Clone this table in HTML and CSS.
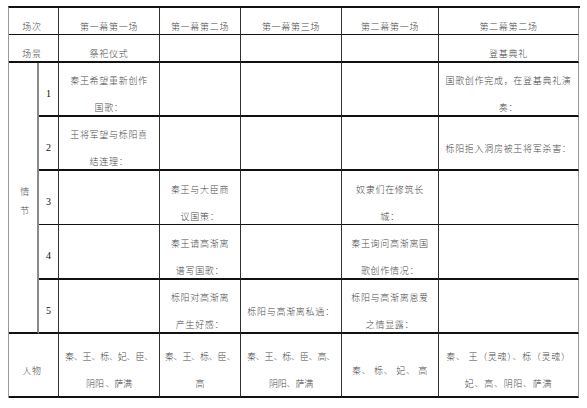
FILE: index.html
```html
<!DOCTYPE html>
<html lang="zh-CN">
<head>
<meta charset="utf-8">
<title>场次表</title>
<link rel="stylesheet" href="styles.css">
</head>
<body>
<div class="table">
  <!-- header row -->
  <div class="c r-hd span2"><span class="t">场次</span></div>
  <div class="c r-hd"><span class="t">第一幕第一场</span></div>
  <div class="c r-hd"><span class="t">第一幕第二场</span></div>
  <div class="c r-hd"><span class="t">第一幕第三场</span></div>
  <div class="c r-hd"><span class="t">第二幕第一场</span></div>
  <div class="c r-hd last"><span class="t">第二幕第二场</span></div>

  <!-- scene row -->
  <div class="c r-sc span2"><span class="t">场景</span></div>
  <div class="c r-sc"><span class="t">祭祀仪式</span></div>
  <div class="c r-sc"></div>
  <div class="c r-sc"></div>
  <div class="c r-sc"></div>
  <div class="c r-sc last"><span class="t">登基典礼</span></div>

  <!-- plot -->
  <div class="c plot"><span class="t plot-t">情<br>节</span></div>

  <div class="c r-1 num"><span class="t n">1</span></div>
  <div class="c r-1"><span class="t">秦王希望重新创作<br>国歌：</span></div>
  <div class="c r-1"></div>
  <div class="c r-1"></div>
  <div class="c r-1"></div>
  <div class="c r-1 last"><span class="t">国歌创作完成，在登基典礼演<br>奏：</span></div>

  <div class="c r-2 num"><span class="t n">2</span></div>
  <div class="c r-2"><span class="t">王将军望与栎阳喜<br>结连理：</span></div>
  <div class="c r-2"></div>
  <div class="c r-2"></div>
  <div class="c r-2"></div>
  <div class="c r-2 last"><span class="t">栎阳拒入洞房被王将军杀害：</span></div>

  <div class="c r-3 num"><span class="t n">3</span></div>
  <div class="c r-3"></div>
  <div class="c r-3"><span class="t">秦王与大臣商<br>议国策：</span></div>
  <div class="c r-3"></div>
  <div class="c r-3"><span class="t">奴隶们在修筑长<br>城：</span></div>
  <div class="c r-3 last"></div>

  <div class="c r-4 num"><span class="t n">4</span></div>
  <div class="c r-4"></div>
  <div class="c r-4"><span class="t">秦王请高渐离<br>谱写国歌：</span></div>
  <div class="c r-4"></div>
  <div class="c r-4"><span class="t">秦王询问高渐离国<br>歌创作情况：</span></div>
  <div class="c r-4 last"></div>

  <div class="c r-5 num"><span class="t n">5</span></div>
  <div class="c r-5"></div>
  <div class="c r-5"><span class="t">栎阳对高渐离<br>产生好感：</span></div>
  <div class="c r-5"><span class="t">栎阳与高渐离私通：</span></div>
  <div class="c r-5"><span class="t">栎阳与高渐离恩爱<br>之情显露：</span></div>
  <div class="c r-5 last"></div>

  <!-- people row -->
  <div class="c r-pp span2"><span class="t">人物</span></div>
  <div class="c r-pp"><span class="t tight">秦、王、栎、妃、臣、<br>阴阳 、萨满</span></div>
  <div class="c r-pp"><span class="t tight">秦、王、栎、臣、<br>高</span></div>
  <div class="c r-pp"><span class="t tight">秦、王、栎、臣、高、<br>阴阳、萨满</span></div>
  <div class="c r-pp"><span class="t">秦、 栎、 妃、 高</span></div>
  <div class="c r-pp last"><span class="t">秦、 王（灵魂）、栎（灵魂）<br>妃、高、阴阳、萨满</span></div>
</div>
</body>
</html>
```

FILE: styles.css
```css
html, body {
  margin: 0;
  padding: 0;
  background: #ffffff;
}

body {
  font-family: "Noto Sans CJK SC", "Noto Sans", sans-serif;
  color: #4a4a4a;
}

.table {
  margin: 6px 0 0 8px;
  width: 571px;
  display: grid;
  grid-template-columns: 30px 20px 101px 81px 101px 97px 140px;
  grid-template-rows: 27px 28px 54px 54px 54px 55px 54px 64px;
  border-top: 2px solid #111;
  border-left: 1px solid #9a9a9a;
  box-sizing: content-box;
}

.c {
  box-sizing: border-box;
  display: flex;
  align-items: center;
  justify-content: center;
  padding-top: 10px;
  border-right: 1px solid #333;
  overflow: visible;
  min-width: 0;
  min-height: 0;
}

.c.last {
  border-right: 1px solid #9a9a9a;
}

.span2 {
  grid-column: 1 / span 2;
  padding-right: 3px;
}

.t {
  display: block;
  font-size: 9px;
  font-weight: 300;
  letter-spacing: 0.7px;
  line-height: 27px;
  text-align: center;
  white-space: nowrap;
}

.t.tight {
  letter-spacing: -0.2px;
}

.r-hd { border-bottom: 1px solid #111; }
.r-sc { border-bottom: 2px solid #111; }
.r-1 { border-bottom: 2px solid #111; }
.r-2 { border-bottom: 2px solid #111; }
.r-3 { border-bottom: 1px solid #111; }
.r-4 { border-bottom: 2px solid #111; }
.r-5 { border-bottom: 2px solid #111; }
.r-pp { border-bottom: 2px solid #111; }

.num {
  grid-column: 2;
  padding-top: 8px;
}

.n {
  font-family: "Liberation Serif", "DejaVu Serif", serif;
  font-size: 10px;
  font-weight: 400;
  letter-spacing: 0;
  color: #111;
}

.plot {
  grid-column: 1;
  grid-row: 3 / span 5;
  border-right: 2px solid #8a8a8a;
  border-bottom: 2px solid #111;
  padding-top: 7px;
  padding-left: 4px;
}

.plot-t {
  line-height: 19px;
}
```
